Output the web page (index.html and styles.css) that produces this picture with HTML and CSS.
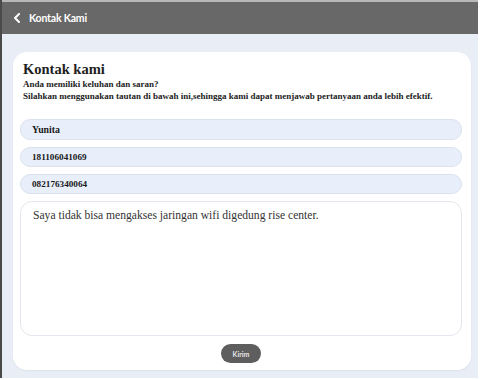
FILE: index.html
```html
<!DOCTYPE html>
<html>
<head>
<meta charset="utf-8">
<link rel="stylesheet" href="styles.css">
</head>
<body>
<div class="frame">
  <div class="topbar">
    <svg class="back" width="8" height="10" viewBox="0 0 8 10"><path d="M6 1 L2 5 L6 9" fill="none" stroke="#fff" stroke-width="2" stroke-linecap="round" stroke-linejoin="round"/></svg>
    <span class="bartitle">Kontak Kami</span>
  </div>
  <div class="content">
    <div class="card">
      <h1 class="title">Kontak kami</h1>
      <p class="sub">Anda memiliki keluhan dan saran?<br>Silahkan menggunakan tautan di bawah ini,sehingga kami dapat menjawab pertanyaan anda lebih efektif.</p>
      <div class="fields">
        <div class="field name">Yunita</div>
        <div class="field">181106041069</div>
        <div class="field">082176340064</div>
        <div class="area">Saya tidak bisa mengakses jaringan wifi digedung rise center.</div>
      </div>
      <div class="actions"><span class="btn">Kirim</span></div>
    </div>
  </div>
</div>
</body>
</html>
```
FILE: styles.css
```css
* { box-sizing: border-box; }
html, body { margin: 0; padding: 0; background: #ffffff; }
.frame {
  width: 478px;
  height: 378px;
  border-left: 2px solid #4a4a4a;
  display: flex;
  flex-direction: column;
  background: #e9edf6;
}
.topbar {
  height: 34px;
  background: #686868;
  border-top: 2px solid #b8b8b8;
  display: flex;
  align-items: center;
  padding-left: 11px;
  gap: 8px;
  flex-shrink: 0;
}
.back { display: block; }
.bartitle {
  font-family: "Lato", "DejaVu Sans", sans-serif;
  font-weight: 700;
  font-size: 10.5px;
  color: #ffffff;
  letter-spacing: -0.2px;
}
.content {
  flex: 1;
  padding: 18px 7px 8px 11px;
  display: flex;
}
.card {
  flex: 1;
  background: #ffffff;
  border-radius: 14px;
  padding: 8px 9px 7px 7px;
  display: flex;
  flex-direction: column;
  box-shadow: 0 1px 2px rgba(0,0,0,0.05);
}
.title {
  margin: 0 0 0 3px;
  font-family: "Liberation Serif", serif;
  font-weight: 700;
  font-size: 14.5px;
  line-height: 18px;
  color: #1e1e1e;
}
.sub {
  margin: 0 0 0 3px;
  font-family: "Liberation Serif", serif;
  font-weight: 700;
  font-size: 9px;
  line-height: 12px;
  color: #222;
}
.fields {
  margin-top: 17px;
  display: flex;
  flex-direction: column;
  gap: 7px;
  flex: 1;
}
.field {
  height: 20px;
  background: #e8effb;
  border: 1px solid #dbe2ee;
  border-radius: 10px;
  padding: 0 11px;
  display: flex;
  align-items: center;
  font-family: "Liberation Serif", serif;
  font-weight: 700;
  font-size: 9.2px;
  color: #1a1a1a;
}
.field.name { height: 21px; font-size: 9.8px; }
.area {
  flex: 1;
  border: 1px solid #e3e6ec;
  border-radius: 12px;
  padding: 7px 12px;
  font-family: "Liberation Serif", serif;
  font-size: 11.6px;
  color: #333;
  background: #fff;
}
.actions {
  display: flex;
  justify-content: center;
  padding-top: 8px;
}
.btn {
  width: 40px;
  height: 19px;
  border-radius: 10px;
  background: #5e5e5e;
  color: #e6e6e6;
  font-family: "Lato", "DejaVu Sans", sans-serif;
  font-weight: 700;
  font-size: 7px;
  display: flex;
  align-items: center;
  justify-content: center;
}
```
